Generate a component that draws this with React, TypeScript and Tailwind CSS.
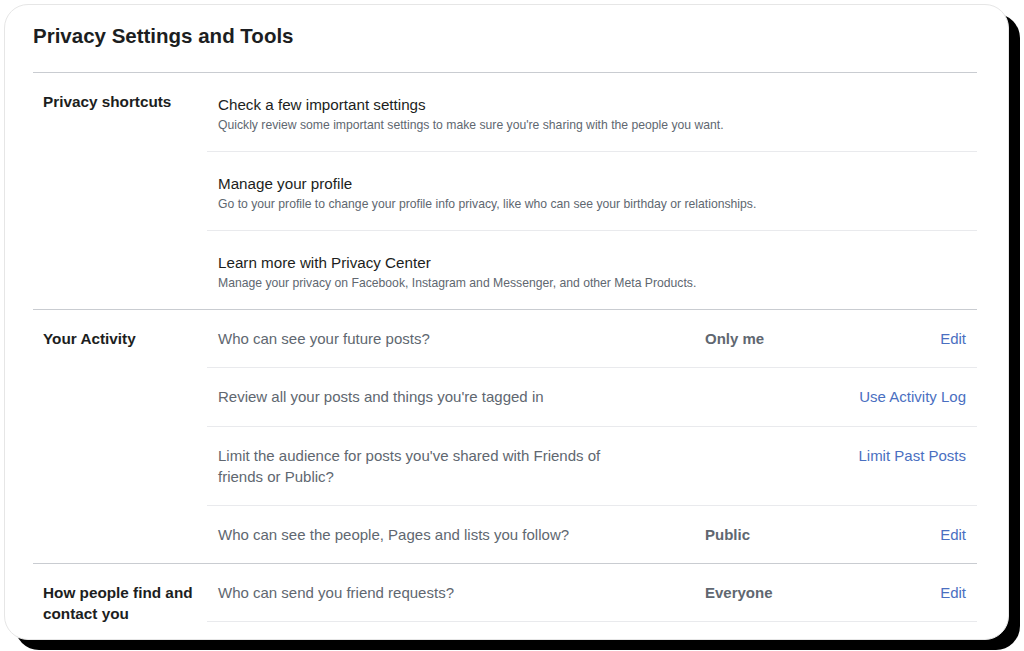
import React from "react"

const shortcuts = [
  {
    title: "Check a few important settings",
    desc: "Quickly review some important settings to make sure you're sharing with the people you want.",
  },
  {
    title: "Manage your profile",
    desc: "Go to your profile to change your profile info privacy, like who can see your birthday or relationships.",
  },
  {
    title: "Learn more with Privacy Center",
    desc: "Manage your privacy on Facebook, Instagram and Messenger, and other Meta Products.",
  },
]

type Setting = { question: string; value?: string; action: string; tall?: boolean }

const activity: Setting[] = [
  { question: "Who can see your future posts?", value: "Only me", action: "Edit" },
  { question: "Review all your posts and things you're tagged in", action: "Use Activity Log", tall: true },
  {
    question: "Limit the audience for posts you've shared with Friends of friends or Public?",
    action: "Limit Past Posts",
  },
  { question: "Who can see the people, Pages and lists you follow?", value: "Public", action: "Edit" },
]

const findYou: Setting[] = [
  { question: "Who can send you friend requests?", value: "Everyone", action: "Edit" },
]

function SettingRow({ item, last }: { item: Setting; last: boolean }) {
  return (
    <div
      className={`flex items-start px-[11px] pt-[18px] ${item.tall ? "pb-[19px]" : "pb-[18px]"} ${
        last ? "" : "border-b border-[#e9eaed]"
      }`}
    >
      <div className="w-[487px] shrink-0">
        <p className="max-w-[410px] text-[15px] leading-[21px] text-[#606770]">{item.question}</p>
      </div>
      <div className="w-[120px] shrink-0 text-[15px] font-bold leading-[21px] text-[#606770]">
        {item.value}
      </div>
      <a className="flex-1 text-right text-[15px] leading-[21px] text-[#4a6fc1]" href="#">
        {item.action}
      </a>
    </div>
  )
}

function Section({ label, children, last }: { label: string; children: React.ReactNode; last?: boolean }) {
  return (
    <div className={`flex ${last ? "" : "border-b border-[#c9ccd1]"}`}>
      <div className="w-[174px] shrink-0 pl-[10px] pr-[10px] pt-[18px]">
        <h3 className="text-[15.3px] font-bold leading-[21px] text-[#1c1e21]">{label}</h3>
      </div>
      <div className="flex-1">{children}</div>
    </div>
  )
}

export default function App() {
  return (
    <div className="min-h-[651px] bg-white pl-[4px] pt-[4px] font-['Liberation_Sans',Arial,sans-serif]">
      <div className="h-[636px] w-[1005px] overflow-hidden rounded-[24px] border border-[#e6e6e6] bg-white pl-[28px] pr-[31px] shadow-[11px_10px_0_0_#000]">
        <h1 className="pt-[19px] pb-[24px] text-[20.5px] font-bold leading-[24px] text-[#1c1e21]">
          Privacy Settings and Tools
        </h1>
        <div className="border-t border-[#c9ccd1]">
          <Section label="Privacy shortcuts">
            {shortcuts.map((s, i) => (
              <div
                key={s.title}
                className={`px-[11px] pt-[21px] pb-[18px] ${i < shortcuts.length - 1 ? "border-b border-[#e9eaed]" : ""}`}
              >
                <div className="text-[15.2px] leading-[21px] text-[#1c1e21]">{s.title}</div>
                <div className="mt-[2px] text-[12.2px] leading-[16px] text-[#606770]">{s.desc}</div>
              </div>
            ))}
          </Section>
          <Section label="Your Activity">
            {activity.map((s, i) => (
              <SettingRow key={s.question} item={s} last={i === activity.length - 1} />
            ))}
          </Section>
          <Section label="How people find and contact you" last>
            {findYou.map((s) => (
              <div key={s.question} className="border-b border-[#e9eaed]">
                <SettingRow item={s} last={true} />
              </div>
            ))}
          </Section>
        </div>
      </div>
    </div>
  )
}
